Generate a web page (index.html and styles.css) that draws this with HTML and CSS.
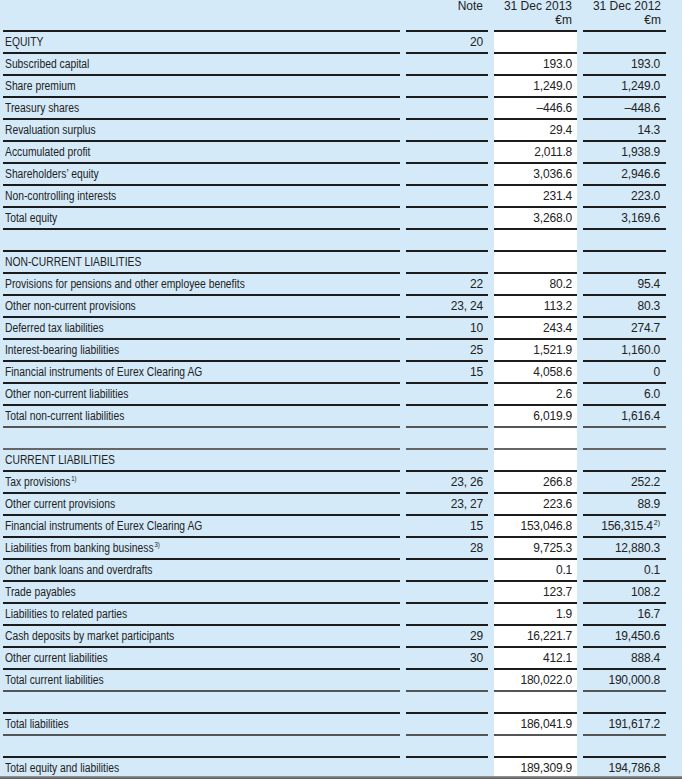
FILE: index.html
```html
<!DOCTYPE html>
<html>
<head>
<meta charset="utf-8">
<link rel="stylesheet" href="styles.css">
</head>
<body>
<table class="sheet">
  <colgroup>
    <col class="c-label"><col class="c-note"><col class="c-cur"><col class="c-prev">
  </colgroup>
  <thead>
    <tr class="head">
      <td class="label"></td>
      <td class="num"><span class="hd">Note</span></td>
      <td class="num"><span class="hd">31 Dec 2013<br>€m</span></td>
      <td class="num"><span class="hd">31 Dec 2012<br>€m</span></td>
    </tr>
  </thead>
  <tbody>
    <tr><td class="label"><span class="t">EQUITY</span></td><td class="num">20</td><td class="num cur"></td><td class="num"></td></tr>
    <tr><td class="label"><span class="t">Subscribed capital</span></td><td class="num"></td><td class="num cur">193.0</td><td class="num prev">193.0</td></tr>
    <tr><td class="label"><span class="t">Share premium</span></td><td class="num"></td><td class="num cur">1,249.0</td><td class="num prev">1,249.0</td></tr>
    <tr><td class="label"><span class="t">Treasury shares</span></td><td class="num"></td><td class="num cur">–446.6</td><td class="num prev">–448.6</td></tr>
    <tr><td class="label"><span class="t">Revaluation surplus</span></td><td class="num"></td><td class="num cur">29.4</td><td class="num prev">14.3</td></tr>
    <tr><td class="label"><span class="t">Accumulated profit</span></td><td class="num"></td><td class="num cur">2,011.8</td><td class="num prev">1,938.9</td></tr>
    <tr><td class="label"><span class="t">Shareholders’ equity</span></td><td class="num"></td><td class="num cur">3,036.6</td><td class="num prev">2,946.6</td></tr>
    <tr><td class="label"><span class="t">Non-controlling interests</span></td><td class="num"></td><td class="num cur">231.4</td><td class="num prev">223.0</td></tr>
    <tr><td class="label"><span class="t">Total equity</span></td><td class="num"></td><td class="num cur">3,268.0</td><td class="num prev">3,169.6</td></tr>
    <tr class="spacer"><td class="label"></td><td class="num"></td><td class="num cur"></td><td class="num"></td></tr>
    <tr><td class="label"><span class="t">NON-CURRENT LIABILITIES</span></td><td class="num"></td><td class="num cur"></td><td class="num"></td></tr>
    <tr><td class="label"><span class="t">Provisions for pensions and other employee benefits</span></td><td class="num">22</td><td class="num cur">80.2</td><td class="num prev">95.4</td></tr>
    <tr><td class="label"><span class="t">Other non-current provisions</span></td><td class="num">23, 24</td><td class="num cur">113.2</td><td class="num prev">80.3</td></tr>
    <tr><td class="label"><span class="t">Deferred tax liabilities</span></td><td class="num">10</td><td class="num cur">243.4</td><td class="num prev">274.7</td></tr>
    <tr><td class="label"><span class="t">Interest-bearing liabilities</span></td><td class="num">25</td><td class="num cur">1,521.9</td><td class="num prev">1,160.0</td></tr>
    <tr><td class="label"><span class="t">Financial instruments of Eurex Clearing AG</span></td><td class="num">15</td><td class="num cur">4,058.6</td><td class="num prev">0</td></tr>
    <tr><td class="label"><span class="t">Other non-current liabilities</span></td><td class="num"></td><td class="num cur">2.6</td><td class="num prev">6.0</td></tr>
    <tr class="grey"><td class="label"><span class="t">Total non-current liabilities</span></td><td class="num"></td><td class="num cur">6,019.9</td><td class="num prev">1,616.4</td></tr>
    <tr class="spacer grey"><td class="label"></td><td class="num"></td><td class="num cur"></td><td class="num"></td></tr>
    <tr><td class="label"><span class="t">CURRENT LIABILITIES</span></td><td class="num"></td><td class="num cur"></td><td class="num"></td></tr>
    <tr><td class="label"><span class="t">Tax provisions<sup>1)</sup></span></td><td class="num">23, 26</td><td class="num cur">266.8</td><td class="num prev">252.2</td></tr>
    <tr><td class="label"><span class="t">Other current provisions</span></td><td class="num">23, 27</td><td class="num cur">223.6</td><td class="num prev">88.9</td></tr>
    <tr><td class="label"><span class="t">Financial instruments of Eurex Clearing AG</span></td><td class="num">15</td><td class="num cur">153,046.8</td><td class="num prev">156,315.4<sup>2)</sup></td></tr>
    <tr><td class="label"><span class="t">Liabilities from banking business<sup>3)</sup></span></td><td class="num">28</td><td class="num cur">9,725.3</td><td class="num prev">12,880.3</td></tr>
    <tr><td class="label"><span class="t">Other bank loans and overdrafts</span></td><td class="num"></td><td class="num cur">0.1</td><td class="num prev">0.1</td></tr>
    <tr><td class="label"><span class="t">Trade payables</span></td><td class="num"></td><td class="num cur">123.7</td><td class="num prev">108.2</td></tr>
    <tr><td class="label"><span class="t">Liabilities to related parties</span></td><td class="num"></td><td class="num cur">1.9</td><td class="num prev">16.7</td></tr>
    <tr><td class="label"><span class="t">Cash deposits by market participants</span></td><td class="num">29</td><td class="num cur">16,221.7</td><td class="num prev">19,450.6</td></tr>
    <tr><td class="label"><span class="t">Other current liabilities</span></td><td class="num">30</td><td class="num cur">412.1</td><td class="num prev">888.4</td></tr>
    <tr class="grey"><td class="label"><span class="t">Total current liabilities</span></td><td class="num"></td><td class="num cur">180,022.0</td><td class="num prev">190,000.8</td></tr>
    <tr class="spacer"><td class="label"></td><td class="num"></td><td class="num cur"></td><td class="num"></td></tr>
    <tr class="grey"><td class="label"><span class="t">Total liabilities</span></td><td class="num"></td><td class="num cur">186,041.9</td><td class="num prev">191,617.2</td></tr>
    <tr class="spacer"><td class="label"></td><td class="num"></td><td class="num cur"></td><td class="num"></td></tr>
    <tr class="last"><td class="label"><span class="t">Total equity and liabilities</span></td><td class="num"></td><td class="num cur">189,309.9</td><td class="num prev">194,786.8</td></tr>
  </tbody>
</table>
<div class="shade"></div>
</body>
</html>
```

FILE: styles.css
```css
html, body {
  margin: 0;
  padding: 0;
  background: #d5eaf8;
}
body {
  font-family: "Liberation Sans", Arial, sans-serif;
  font-size: 12px;
  color: #222222;
  overflow: hidden;
  height: 779px;
  position: relative;
}
.sheet {
  border-collapse: separate;
  border-spacing: 6px 0;
  margin-left: -3px;
  table-layout: fixed;
  width: 675px;
}
.c-label { width: 397px; }
.c-note { width: 82px; }
.c-cur { width: 83px; }
.c-prev { width: 83px; }
td {
  padding: 1px 0 0 0;
  height: 19px;
  line-height: 19px;
  border-bottom: 2px solid #1c1c1c;
  white-space: nowrap;
  vertical-align: middle;
}
.label { padding-left: 2px; }
.t {
  display: inline-block;
  transform: scaleX(0.86);
  transform-origin: 0 50%;
}
.num {
  text-align: right;
  padding-right: 5px;
  letter-spacing: -0.2px;
}
.num.prev { padding-right: 6px; }
.cur { background: #ffffff; }
.head td {
  height: 30px;
  padding-top: 0;
  vertical-align: top;
  line-height: 14px;
  letter-spacing: 0;
}
.hd {
  display: block;
  margin-top: -1px;
}
.grey td { border-bottom-color: #555555; }
.spacer.grey td { border-bottom-color: #666666; }
.last td {
  border-bottom: none;
  height: 23px;
  line-height: 19px;
  vertical-align: top;
}
sup {
  font-size: 7px;
  line-height: 0;
  vertical-align: 5px;
  margin-left: 1px;
  letter-spacing: 0;
}
.shade {
  position: absolute;
  left: 0;
  right: 0;
  bottom: 0;
  height: 3px;
  background: linear-gradient(#9a9a9a, #555555);
}
```
